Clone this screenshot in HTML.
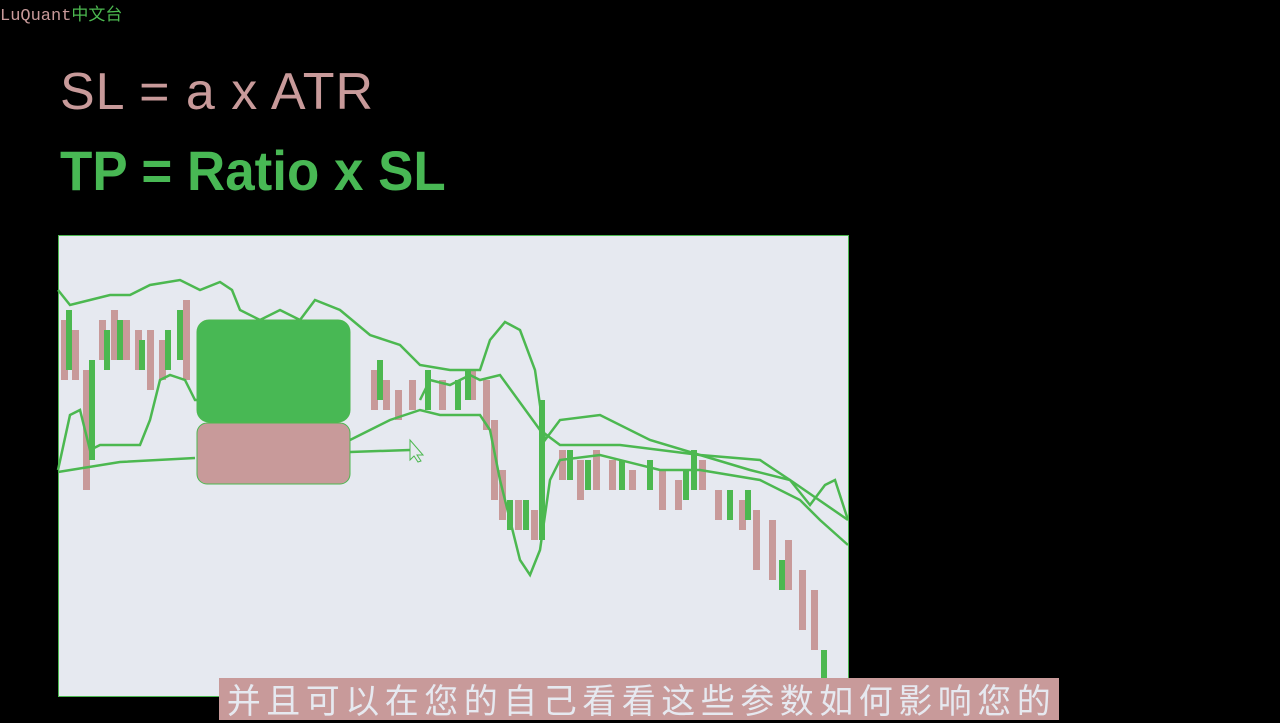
<!DOCTYPE html>
<html><head><meta charset="utf-8"><style>
body{margin:0;width:1280px;height:720px;background:#000;position:relative;overflow:hidden;font-family:"Liberation Sans",sans-serif}
.logo{position:absolute;left:0;top:0;font:17px "Liberation Mono","Noto Sans CJK SC",monospace;color:#c89a9a}
.logo span{color:#4cb850}
.f1{position:absolute;left:60px;top:62px;font-size:52px;color:#c89a9a;letter-spacing:1px}
.f2{position:absolute;left:60px;top:138px;font-size:56px;font-weight:bold;color:#48b854;transform:scaleX(0.945);transform-origin:0 0}
.sub{position:absolute;left:219px;top:678px;width:840px;height:42px;background:#c89a9a;color:#e6e9f0;font:34px "Noto Sans CJK SC",sans-serif;line-height:42px;text-align:center;letter-spacing:5.5px;white-space:nowrap;text-indent:5px}
</style></head><body>
<div class="logo">LuQuant<span>中文台</span></div>
<div class="f1">SL = a x ATR</div>
<div class="f2">TP = Ratio x SL</div>
<svg style="position:absolute;left:0;top:0" width="1280" height="720">
<rect x="58.5" y="235.5" width="790" height="461" fill="#e6e9f0" stroke="#4cb850"/>
<g fill="#c89a9a">
<path d="M61 320h7v60h-7zM72 330h7v50h-7zM83 370h7v120h-7zM99 320h7v40h-7zM111 310h7v50h-7zM123 320h7v40h-7zM135 330h7v40h-7zM147 330h7v60h-7zM159 340h7v40h-7zM183 300h7v80h-7zM371 370h7v40h-7zM383 380h7v30h-7zM395 390h7v30h-7zM409 380h7v30h-7zM439 380h7v30h-7zM469 370h7v30h-7zM483 380h7v50h-7zM491 420h7v80h-7zM499 470h7v50h-7zM515 500h7v30h-7zM531 510h7v30h-7zM559 450h7v30h-7zM577 460h7v40h-7zM593 450h7v40h-7zM609 460h7v30h-7zM629 470h7v20h-7zM659 470h7v40h-7zM675 480h7v30h-7zM699 460h7v30h-7zM715 490h7v30h-7zM739 500h7v30h-7zM753 510h7v60h-7zM769 520h7v60h-7zM785 540h7v50h-7zM799 570h7v60h-7zM811 590h7v60h-7z"/>
</g>
<g fill="#4cb850">
<path d="M66 310h6v60h-6zM89 360h6v100h-6zM104 330h6v40h-6zM117 320h6v40h-6zM139 340h6v30h-6zM165 330h6v40h-6zM177 310h6v50h-6zM377 360h6v40h-6zM425 370h6v40h-6zM455 380h6v30h-6zM465 370h6v30h-6zM507 500h6v30h-6zM523 500h6v30h-6zM539 400h6v140h-6zM567 450h6v30h-6zM585 460h6v30h-6zM619 460h6v30h-6zM647 460h6v30h-6zM683 470h6v30h-6zM691 450h6v40h-6zM727 490h6v30h-6zM745 490h6v30h-6zM779 560h6v30h-6zM821 650h6v40h-6z"/>
</g>
<g fill="none" stroke="#4cb850" stroke-width="2.5">
<path d="M58 290L70 305 90 300 110 295 130 295 150 285 180 280 200 290 220 282 232 290 240 310 260 320 280 310 300 320 315 300 340 310 370 335 400 345 420 365 450 370 480 370 490 340 505 322 520 330 535 370 545 440 560 420 600 415 650 440 700 455 760 460 790 480 810 505 825 485 835 480 848 520"/>
<path d="M58 470L70 415 80 410 90 450 100 445 140 445 150 420 160 380 170 375 185 380 190 390 195 400 210 400 220 410 230 420"/>
<path d="M350 440L370 430 390 420 420 410 440 415 480 415 490 430 500 480 520 560 530 575 540 550 550 480 560 460 600 455 660 470 700 470 760 480 800 500 820 520 848 545"/>
<path d="M58 472L120 462 195 458M350 452L410 450"/>
<path d="M420 400L430 380 450 385 470 375 480 380 500 375 540 430 560 445 620 445 700 455 750 470 790 480 848 520"/>
</g>
<rect x="197" y="320" width="153" height="102" rx="12" fill="#48b854" stroke="#4cb850"/>
<rect x="197" y="423" width="153" height="61" rx="10" fill="#c89a9a" stroke="#4cb850"/>
<path d="M410 440l0 20 4-4 4 6 3-1-4-6 6 0z" fill="#e6e9f0" stroke="#4cb850"/>
</svg>
<div class="sub">并且可以在您的自己看看这些参数如何影响您的</div>
</body></html>
